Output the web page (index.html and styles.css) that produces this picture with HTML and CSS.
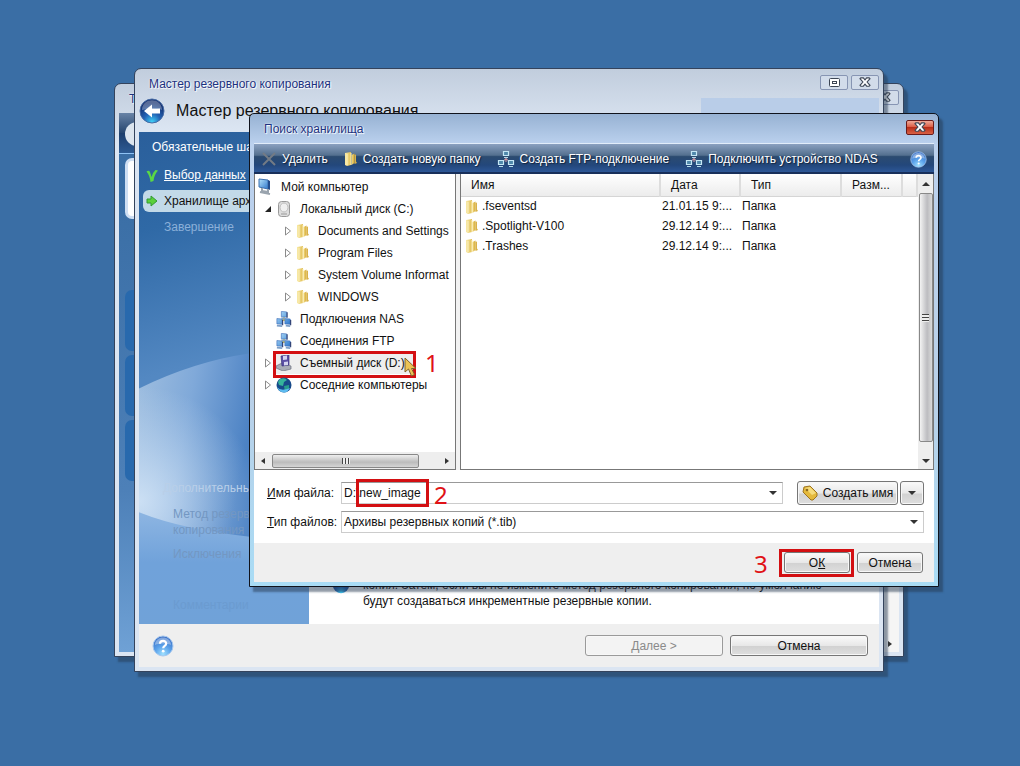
FILE: index.html
```html
<!DOCTYPE html>
<html lang="ru">
<head>
<meta charset="utf-8">
<title>Мастер резервного копирования</title>
<link rel="stylesheet" href="styles.css">
</head>
<body>
<svg class="defs" aria-hidden="true">
  <defs>
    <linearGradient id="gold" x1="0" x2="1"><stop offset="0" stop-color="#f3dd86"/><stop offset="1" stop-color="#d3a633"/></linearGradient>
    <linearGradient id="goldpale" x1="0" x2="1"><stop offset="0" stop-color="#f9eba8"/><stop offset="1" stop-color="#e0bd52"/></linearGradient>
    <radialGradient id="ball" cx=".5" cy=".9" r=".9"><stop offset="0" stop-color="#9fe0ff"/><stop offset=".45" stop-color="#5ba2ea"/><stop offset="1" stop-color="#3569c2"/></radialGradient>
    <radialGradient id="deep" cx=".5" cy=".95" r=".8"><stop offset="0" stop-color="#3fd0f8"/><stop offset=".45" stop-color="#2362b4"/><stop offset="1" stop-color="#122d6c"/></radialGradient>
    <linearGradient id="screen" x1="0" y1="0" x2="1" y2="1"><stop offset="0" stop-color="#b5e2fb"/><stop offset="1" stop-color="#2f78cc"/></linearGradient>
    <symbol id="folder" viewBox="0 0 14 16"><path d="M1 2l6-1v13l-4 1-2-1z" fill="url(#goldpale)"/><path d="M7 2v12" stroke="#fff3c0"/><path d="M7.500 4l3-1.500v9.500l-3 2z" fill="url(#gold)"/><path d="M10.500 4l1.500-.500v7l1 1.500-2.500 1z" fill="#d9b248"/><path d="M3 3v11" stroke="#fff7cc" opacity=".8"/></symbol>
    <symbol id="net" viewBox="0 0 18 18"><path d="M9 7v5M4 12l5-3 5 3" stroke="#e0a0a8" fill="none"/><g fill="#4f87aa" stroke="#c5e6f4" stroke-width="1.200"><path d="M6.500 1.500h5v4h-5zM1.500 10.500h5v4h-5zM11.500 10.500h5v4h-5z"/></g><path d="M7 7.500h4M2 16.500h4M12 16.500h4" stroke="#b4d9e8" stroke-width="1.200"/></symbol>
    <symbol id="nas" viewBox="0 0 18 18"><path d="M9 7v4M5 12l4-3 4 3" stroke="#c8b840" stroke-width="2" fill="none"/><g fill="url(#screen)" stroke="#3c6cb8" stroke-width=".7"><path d="M6 .500l6 .5v6l-6-.5zM1 8.500l6 .5v6l-6-.5zM10 8.500l6 .5v6l-6-.5z"/></g><path d="M6 8l5 1M1 16.500l6 .5M11 16.500l5 .500" stroke="#7d9fc8" stroke-width="1.800"/><path d="M12.500 1.500v6M7.500 10v6M16.500 10v6" stroke="#25366b" stroke-width="1.200"/></symbol>
    <symbol id="help" viewBox="0 0 22 22"><circle cx="11" cy="11" r="10" fill="url(#ball)" stroke="#a7c8ee"/><path d="M3 10c0-10 16-10 16 0-4-2-12-2-16 0z" fill="#fff" opacity=".35"/><path d="M8 8.700C8 5 14.200 5 14.200 8.600c0 2.400-3 2.200-3 4.600" fill="none" stroke="#fff" stroke-width="2.200"/><circle cx="11.200" cy="16.200" r="1.400" fill="#fff"/></symbol>
    <symbol id="cross" viewBox="0 0 14 12"><path d="M1 2l1-1h3l2 2.500L9 1h3l1 1-3.500 4L13 10l-1 1H9L7 8.500 5 11H2l-1-1 3.500-4z" fill="#fff" stroke="#3d4654" stroke-width="1.300"/></symbol>
    <symbol id="closed" viewBox="0 0 8 12"><path d="M1.500 2l5 4-5 4z" fill="#fff" stroke="#8b8b8b"/></symbol>
  </defs>
</svg>

<main class="desktop">
  <section class="window back" aria-label="Окно программы">
    <header class="titlebar"><span class="caption">T</span><button class="winbtn" aria-label="Закрыть"><svg width="12" height="10"><use href="#cross"/></svg></button></header>
    <div class="backbody">
      <div class="backbar"><span class="disc"></span></div>
      <div class="backmain">
        <div class="backside"><span class="tab lit"></span><span class="tab"></span><span class="tab"></span><span class="tab"></span></div>
        <div class="backpage"><span class="tri right"></span></div>
      </div>
    </div>
  </section>

  <section class="window wizard" aria-label="Мастер резервного копирования">
    <header class="titlebar">
      <span class="caption">Мастер резервного копирования</span>
      <button class="winbtn" aria-label="Развернуть"><svg width="13" height="11" viewBox="0 0 13 11"><rect x="1.500" y="1.500" width="10" height="8" rx="1" fill="#fff" stroke="#3d4654"/><rect x="4.500" y="4.500" width="4" height="2" fill="none" stroke="#3d4654"/></svg></button>
      <button class="winbtn" aria-label="Закрыть"><svg width="12" height="10"><use href="#cross"/></svg></button>
    </header>
    <div class="heading">
      <button class="round" aria-label="Назад"><svg width="26" height="26" viewBox="0 0 26 26"><circle cx="13" cy="13" r="12" fill="url(#deep)" stroke="#466ba5"/><path d="M3 12C3-1 23-1 23 12c-6-3-14-1-20 0z" fill="#fff" opacity=".3"/><path d="M5 13l8-6.500v4h8v5h-8v4z" fill="#fff"/></svg></button>
      <h1>Мастер резервного копирования</h1>
      <span class="patch"></span>
    </div>
    <div class="wizbody">
      <nav class="steps">
        <svg class="swoosh" viewBox="0 0 170 493" preserveAspectRatio="none" aria-hidden="true">
          <defs>
            <linearGradient id="sky" x1="0" y1="0" x2=".1" y2="1"><stop offset="0" stop-color="#2a5f9b"/><stop offset=".2" stop-color="#2f69a6"/><stop offset=".5" stop-color="#5388c2"/></linearGradient>
            <linearGradient id="wave" x1="0" y1=".1" x2="1" y2=".4"><stop offset="0" stop-color="#9dbddf"/><stop offset=".3" stop-color="#80a9d9"/><stop offset=".65" stop-color="#4c82c4"/></linearGradient>
            <radialGradient id="glow" cx="0" cy=".5" r=".5"><stop offset="0" stop-color="#d6e7f8" stop-opacity=".85"/><stop offset="1" stop-color="#cfe2f5" stop-opacity="0"/></radialGradient>
            <linearGradient id="base" y2="1" x2="0"><stop offset="0" stop-color="#8db5e2"/><stop offset=".45" stop-color="#70a2da"/><stop offset="1" stop-color="#70a2d8"/></linearGradient>
          </defs>
          <path fill="url(#sky)" d="M0 0h170v493H0z"/><path fill="url(#wave)" d="M0 257Q55 230 110 222L170 216V493H0z"/><path fill="url(#glow)" d="M0 255h240v230H0z"/><path fill="url(#base)" d="M0 381Q60 405 170 410V493H0z"/>
        </svg>
        <p class="stephead">Обязательные шаги</p>
        <ul>
          <li><svg class="mark" width="12" height="14" viewBox="0 0 12 14"><path d="M.500 2.500Q3 1 4 3l1.500 5Q7 3 9.500 1L12 1.500Q8 6 7.500 12l-3 1Q4 7 .500 2.500z" fill="#5ad845"/></svg><a href="#data">Выбор данных</a></li>
          <li class="current"><svg class="mark" width="12" height="12" viewBox="0 0 12 12"><path d="M1 4h4V1l6 5-6 5V8H1z" fill="#5ad03b" stroke="#319a34"/></svg>Хранилище архива</li>
          <li class="dim">Завершение</li>
        </ul>
        <p class="more">Дополнительные</p>
        <ul class="extra"><li>Метод резервн.<br>копирования</li><li>Исключения</li><li class="last">Комментарии</li></ul>
      </nav>
      <div class="page"><svg class="info" width="18" height="18" viewBox="0 0 22 22"><circle cx="11" cy="11" r="10" fill="url(#deep)"/></svg><p>копия. Затем, если вы не измените метод резервного копирования, по умолчанию будут создаваться инкрементные резервные копии.</p></div>
    </div>
    <footer class="wizfoot">
      <button class="round" aria-label="Справка"><svg width="22" height="22"><use href="#help"/></svg></button>
      <button class="btn wide" disabled><u>Д</u>алее &gt;</button><button class="btn wide">Отмена</button>
    </footer>
  </section>

  <section class="window dialog" role="dialog" aria-label="Поиск хранилища">
    <header class="titlebar"><span class="caption">Поиск хранилища</span><button class="winbtn red" aria-label="Закрыть"><svg width="12" height="10"><use href="#cross"/></svg></button></header>
    <div class="toolbar">
      <button class="tool"><svg width="16" height="16" viewBox="0 0 16 16"><path d="M2 2l12 12M14 2L2 14" stroke="#737b85" stroke-width="2" fill="none"/></svg>Удалить</button>
      <button class="tool"><svg width="14" height="16"><use href="#folder"/></svg>Создать новую папку</button>
      <button class="tool"><svg width="18" height="18"><use href="#net"/></svg>Создать FTP-подключение</button>
      <button class="tool"><svg width="18" height="18"><use href="#net"/></svg>Подключить устройство NDAS</button>
      <button class="round ask" aria-label="Справка"><svg width="17" height="17" viewBox="0 0 22 22"><use href="#help"/></svg></button>
    </div>
    <div class="panes">
      <div class="treepane">
        <ul class="tree">
          <li class="l0"><svg width="16" height="18" viewBox="0 0 16 18"><path d="M2 1l9 1v9l-9-2z" fill="url(#screen)" stroke="#3c70b0"/><path d="M11 2l2 1v9l-2-1z" fill="#234d8d"/><path d="M5 10v3l6 1v-3M3 14l10 2" stroke="#9aa4ae" stroke-width="2" fill="none"/></svg>Мой компьютер</li>
          <li class="l1"><svg class="arrow" width="8" height="12" viewBox="0 0 8 12"><path d="M7 3v6H1z" fill="#222"/></svg><svg width="16" height="16" viewBox="0 0 16 16"><rect x="2.500" y=".5" width="11" height="15" rx="3" fill="#dedede" stroke="#999"/><ellipse cx="8" cy="6.500" rx="4" ry="4.500" fill="#efefef" stroke="#bbb"/><path d="M5 13h6" stroke="#999"/></svg>Локальный диск (C:)</li>
          <li class="l2"><svg class="arrow" width="8" height="12"><use href="#closed"/></svg><svg width="14" height="16"><use href="#folder"/></svg>Documents and Settings</li>
          <li class="l2"><svg class="arrow" width="8" height="12"><use href="#closed"/></svg><svg width="14" height="16"><use href="#folder"/></svg>Program Files</li>
          <li class="l2"><svg class="arrow" width="8" height="12"><use href="#closed"/></svg><svg width="14" height="16"><use href="#folder"/></svg>System Volume Informat</li>
          <li class="l2"><svg class="arrow" width="8" height="12"><use href="#closed"/></svg><svg width="14" height="16"><use href="#folder"/></svg>WINDOWS</li>
          <li class="l1"><span class="arrow"></span><svg width="16" height="16" viewBox="0 0 18 18"><use href="#nas"/></svg>Подключения NAS</li>
          <li class="l1"><span class="arrow"></span><svg width="16" height="16" viewBox="0 0 18 18"><use href="#nas"/></svg>Соединения FTP</li>
          <li class="l1 picked"><svg class="arrow" width="8" height="12"><use href="#closed"/></svg><svg width="16" height="16" viewBox="0 0 16 16"><path d="M0 11l6-3 9 3v3l-8 2-7-3z" fill="#a8acb6" stroke="#6d7180" stroke-width=".7"/><path d="M5 1l8-1v10l-7 1z" fill="#5b4fa5" stroke="#37327c" stroke-width=".7"/><path d="M7 1l4-.5v4l-4 .5zM8 7l4-.5v3.500l-4 .500z" fill="#d4d5f1"/></svg>Съемный диск (D:)
            <span class="ring one"></span><b class="num n1">1</b>
            <svg class="pointer" width="14" height="21" viewBox="0 0 14 21"><path d="M1 1v14l3.500-3 3 7 3-1.500-3-6H12z" fill="#ecc355" stroke="#81632b"/></svg></li>
          <li class="l1"><svg class="arrow" width="8" height="12"><use href="#closed"/></svg><svg width="16" height="16" viewBox="0 0 16 16"><circle cx="8" cy="8" r="7.500" fill="#174a8a"/><path d="M4 2q5-2 7 1l-3 2-1 4-4-1-1-3z" fill="#35b39b"/><path d="M8 9l5-1v3l-4 4z" fill="#279d8c"/><path d="M1 10q4 5 13 1-3 5-6 4.500Q3 15 1 10z" fill="#5dbcf0"/></svg>Соседние компьютеры</li>
        </ul>
        <div class="hbar"><span class="tri left"></span><span class="hthumb"><i class="grip flat"></i></span><span class="tri right"></span></div>
      </div>
      <div class="listpane">
        <table>
          <colgroup><col><col class="c2"><col class="c3"><col class="c4"><col class="c5"></colgroup>
          <thead><tr><th>Имя</th><th>Дата</th><th>Тип</th><th>Разм...</th><th></th></tr></thead>
          <tbody>
            <tr><td><svg width="14" height="16"><use href="#folder"/></svg>.fseventsd</td><td>21.01.15 9:...</td><td>Папка</td><td></td><td></td></tr>
            <tr><td><svg width="14" height="16"><use href="#folder"/></svg>.Spotlight-V100</td><td>29.12.14 9:...</td><td>Папка</td><td></td><td></td></tr>
            <tr><td><svg width="14" height="16"><use href="#folder"/></svg>.Trashes</td><td>29.12.14 9:...</td><td>Папка</td><td></td><td></td></tr>
          </tbody>
        </table>
        <div class="vbar"><span class="tri up"></span><span class="vthumb"><i class="grip"></i></span><span class="tri down"></span></div>
      </div>
    </div>
    <form class="fields">
      <div class="row">
        <label for="fname"><u>И</u>мя файла:</label>
        <div class="combo"><input id="fname" type="text" value="D:\new_image"><span class="tri down"></span><span class="ring two"></span><b class="num n2">2</b></div>
        <div class="split"><button type="button" class="btn make"><svg width="17" height="16" viewBox="0 0 17 16"><path d="M2 2l6-1 7 7v3l-4 4H9L1 7z" fill="#e4b93c" stroke="#9d7420"/><path d="M3 3l5-1 6 6-4 2z" fill="#f6dc7c"/><circle cx="5" cy="5" r="1.300" fill="#8b6820"/></svg>Создать имя</button><button type="button" class="btn drop" aria-label="Варианты имени"><span class="tri down"></span></button></div>
      </div>
      <div class="row">
        <label for="ftype"><u>Т</u>ип файлов:</label>
        <div class="combo"><select id="ftype"><option>Архивы резервных копий (*.tib)</option></select><span class="tri down"></span></div>
      </div>
    </form>
    <footer class="dlgfoot"><div class="okwrap"><button class="btn">О<u>К</u></button><span class="ring three"></span><b class="num n3">3</b></div><button class="btn">Отмена</button></footer>
  </section>
</main>
</body>
</html>
```
FILE: styles.css
```css
* { box-sizing: border-box; }
body { margin: 0; font: 12px/16px "Liberation Sans", Arial, sans-serif; color: #111; background: #3a6ea5; }
button, input, select { font: inherit; color: inherit; margin: 0; padding: 0; }
button { background: none; border: 0; }
ul { list-style: none; margin: 0; padding: 0; }
p { margin: 0; }
svg { display: block; flex: none; }
.defs { position: absolute; width: 0; height: 0; }
.desktop { position: relative; min-height: 100vh; overflow: hidden; }

/* windows */
.window { position: absolute; display: flex; flex-direction: column; padding: 0 4px 4px; border: 1px solid #34435c; border-radius: 7px 7px 0 0; box-shadow: 4px 5px 2px rgba(35, 55, 80, .5); background: linear-gradient(#c1cddd, #dbe5f2 60px); }
.back { top: 83px; right: 116px; bottom: 109px; left: 114px; }
.wizard { top: 68px; right: 136px; bottom: 94px; left: 134px; }
.dialog { top: 113px; right: 81px; bottom: 179px; left: 249px; border-color: #10131c; border-radius: 5px 5px 0 0; background: linear-gradient(#97b2d3, #bbd1ee 30px, #b9d0e8 60%, #a9dcf5); }
.titlebar { display: flex; gap: 3px; align-items: center; height: 29px; flex: none; }
.caption { flex: 1; padding-left: 10px; color: #1c3280; text-shadow: 0 0 2px #fff, 1px 1px 1px #fff; }
.winbtn { display: grid; place-items: center; width: 28px; height: 15px; margin-bottom: 3px; border: 1px solid #8795b3; border-radius: 2px; background: #d2dcea; }
.winbtn.red { border-color: #691b1b; background: linear-gradient(#f0aa98, #d9553d 50%, #b82e19 50%, #d96144); }
.round { border-radius: 50%; }
.tri { display: inline-block; width: 0; height: 0; border: 3px solid transparent; flex: none; }
.tri.down { border-top: 4px solid #333; border-bottom: 0; border-width: 4px 4px 0; }
.tri.up { border-bottom: 4px solid #333; border-width: 0 4px 4px; }
.tri.left { border-right: 4px solid #333; border-left: 0; }
.tri.right { border-left: 4px solid #333; border-right: 0; }
.btn { display: flex; align-items: center; justify-content: center; height: 21px; border: 1px solid #767676; border-radius: 3px; background: linear-gradient(#fafafa, #e8e8e8 50%, #d2d2d2 55%, #dedede); box-shadow: inset 0 0 0 1px #f7f7f7; }
.btn:disabled { color: #8a8a8a; border-color: #9a9a9a; background: #f3f3f3; }

/* program window behind */
.backbody { flex: 1; display: flex; flex-direction: column; background: linear-gradient(#3a6ea5 15%, #4d80b8 70%, #6fa1d5); }
.backbar { height: 41px; padding: 9px 6px; border-bottom: 1px solid #8fc3f5; background: linear-gradient(#6883a6, #26466f 50%, #1d3e6c 50%, #2d5b94); }
.disc { display: block; width: 24px; height: 24px; border-radius: 50%; background: #dce5ee; }
.backmain { flex: 1; display: flex; justify-content: space-between; }
.backside { display: grid; gap: 4px; align-content: start; padding: 4px 6px; }
.tab { width: 60px; height: 61px; border-radius: 7px; background: #2869ad; }
.tab.lit { background: #fff; border: 3px solid #cfdff3; margin-bottom: 67px; }
.backpage { display: flex; align-items: end; width: 60px; padding: 0 0 5px 49px; background: #f5f5f5; }

/* wizard */
.heading { display: flex; align-items: stretch; height: 34px; flex: none; }
.heading .round { margin-right: 11px; align-self: start; }
h1 { flex: 1; margin: 0; font: 16px/26px "Liberation Sans", Arial, sans-serif; white-space: nowrap; }
.patch { width: 24%; background: #b9cde8; }
.wizbody { flex: 1; display: flex; min-height: 0; }
.steps { position: relative; isolation: isolate; width: 170px; flex: none; padding-top: 7px; color: #fff; overflow: hidden; white-space: nowrap; }
.swoosh { position: absolute; z-index: -1; inset: 0; width: 100%; height: 100%; }
.stephead { padding-left: 13px; margin-bottom: 9px; }
.steps li { position: relative; padding: 3px 0 3px 25px; margin-bottom: 4px; }
.steps a { color: #fff; }
.steps .mark { position: absolute; left: 7px; top: 5px; }
.steps .current { margin-left: 4px; padding-left: 21px; border-radius: 6px 0 0 6px; color: #111; background: #c2d9e8; }
.steps .current .mark { left: 3px; }
.steps .dim { color: #8bb0d9; }
.more { margin-top: 242px; padding-left: 24px; color: #b9cfe8; }
.steps .extra { margin-top: 7px; color: #7397c2; }
.steps .extra li { padding-left: 34px; margin-bottom: 2px; }
.steps .extra .last { margin-top: 29px; color: #6b9bd0; }
.page { flex: 1; display: flex; gap: 13px; align-items: end; padding: 0 40px 15px 23px; background: #fff; }
.info { margin-bottom: 15px; }
.wizfoot { display: flex; align-items: center; gap: 7px; height: 43px; flex: none; padding: 0 11px 0 13px; background: #efefef; }
.wizfoot .round { margin-right: auto; }
.wide { width: 138px; }

/* storage dialog */
.toolbar { display: flex; align-items: center; height: 31px; flex: none; padding: 2px 7px 0; gap: 16px; border-top: 1px solid #e2edfa; border-bottom: 2px solid #182f5a; background: linear-gradient(#8ba1c0, #54708f 40%, #2c4b70 45%, #23477b 75%, #2d5797); }
.tool { display: flex; align-items: center; gap: 5px; color: #fff; white-space: nowrap; text-shadow: 1px 1px 1px #13233c; }
.ask { margin-left: auto; }
.dialog .winbtn { margin-bottom: 3px; }
.panes { flex: 1; display: flex; gap: 4px; min-height: 0; background: #f2f2f2; }
.treepane { width: 202px; flex: none; display: flex; flex-direction: column; border: 1px solid #777; border-top: 0; background: #fff; }
.tree { flex: 1; padding-top: 2px; white-space: nowrap; }
.tree li { position: relative; display: flex; align-items: center; height: 22px; gap: 8px; }
.l0 { padding-left: 2px; }
.l1 { padding-left: 9px; }
.l2 { padding-left: 29px; }
.arrow { width: 8px; flex: none; margin-right: -4px; }
.hbar { display: flex; align-items: center; justify-content: space-between; height: 17px; padding: 0 6px; background: #eee; }
.hthumb { display: grid; place-items: center; width: 147px; height: 14px; margin: 0 auto 0 7px; border: 1px solid #888; border-radius: 2px; background: linear-gradient(#eee, #bcbcbc 60%, #d5d5d5); }
.listpane { flex: 1; display: flex; min-width: 0; border: 1px solid #777; border-top: 0; background: #fff; }
table { flex: 1; width: 100%; table-layout: fixed; border-collapse: collapse; align-self: start; }
.c2 { width: 80px; } .c3 { width: 101px; } .c4 { width: 61px; } .c5 { width: 15px; }
th { height: 22px; padding: 1px 0 0 10px; font-weight: 400; text-align: left; border-right: 2px solid #ddd; border-bottom: 1px solid #d5d5d5; background: linear-gradient(#fff, #ececec); }
td { height: 20px; padding: 0 0 0 2px; white-space: nowrap; }
td:first-child { padding-left: 4px; }
td svg { display: inline-block; vertical-align: middle; margin-right: 3px; }
.vbar { display: flex; flex-direction: column; align-items: center; width: 15px; padding: 8px 0 6px; background: #eee; }
.vthumb { flex: 1; display: grid; place-items: center; width: 14px; margin: 7px 0 17px; border: 1px solid #888; border-radius: 2px; background: linear-gradient(90deg, #f3f3f3, #bcbcc0 60%, #d9d9d9); }
.grip { width: 7px; height: 8px; background: repeating-linear-gradient(#444 0 1px, #eee 1px 3px); }
.grip.flat { width: 8px; height: 6px; background: repeating-linear-gradient(90deg, #444 0 1px, #eee 1px 3px); }
.fields { display: grid; gap: 6px; padding: 11px 10px 10px 13px; background: #fff; }
.row { display: flex; align-items: center; }
.row label { width: 74px; flex: none; white-space: nowrap; }
.combo { position: relative; display: flex; align-items: center; flex: 1; height: 22px; padding: 0 5px 0 2px; border: 1px solid #ccc; border-top-color: #999; }
.combo input, .combo select { flex: 1; min-width: 0; border: 0; outline: 0; background: none; appearance: none; }
.split { display: flex; gap: 2px; margin-left: 14px; }
.split .btn { height: 24px; }
.make { width: 101px; gap: 4px; }
.drop { width: 24px; }
.dlgfoot { display: flex; justify-content: flex-end; gap: 7px; height: 39px; flex: none; padding: 9px 11px; background: #efefef; }
.dlgfoot .btn { width: 66px; }
.okwrap { position: relative; }

/* callouts */
.ring { position: absolute; border: 3px solid #d30f12; pointer-events: none; }
.one { left: 18px; top: -1px; width: 143px; height: 27px; }
.two { left: 14px; top: -4px; width: 73px; height: 28px; }
.three { inset: -3px -4px 7px -5px; height: 28px; }
.num { position: absolute; font: 24px/24px "Noto Sans", sans-serif; color: #e01216; }
.n1 { left: 170px; top: -1px; }
.n2 { left: 92px; top: 0; }
.n3 { left: -30px; top: 0; }
.pointer { position: absolute; left: 149px; top: 5px; z-index: 2; }
.picked { background: linear-gradient(90deg, transparent 18px, #eee 18px 160px, transparent 160px); }
```
